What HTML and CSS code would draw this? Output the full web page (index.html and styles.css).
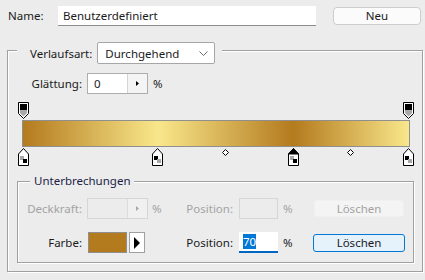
FILE: index.html
```html
<!DOCTYPE html>
<html lang="de">

<head>
    <meta charset="UTF-8">
    <meta name="viewport" content="width=device-width, initial-scale=1.0">
    <link rel="stylesheet" href="styles.css">
</head>

<body>

    <div class="name-row">
        <span class="name-label">Name:</span>
        <div class="name-field">Benutzerdefiniert</div>
        <button class="btn btn-new">Neu</button>
    </div>

    <div class="group main-group">
        <div class="group-head">
            <span class="type-label">Verlaufsart:</span>
            <div class="select">
                <span>Durchgehend</span>
                <svg class="chevron" width="9" height="5" viewBox="0 0 9 5"><path d="M0.5 0.5l4 4l4-4" fill="none" stroke="#6b6b6b"/></svg>
            </div>
        </div>

        <div class="row smooth-row">
            <span class="label smooth-label">Glättung:</span>
            <div class="spin">
                <span class="spin-value">0</span>
                <span class="spin-btn"><svg width="3" height="5" viewBox="0 0 3 5"><path d="M0 0l3 2.5l-3 2.5z" fill="#000"/></svg></span>
            </div>
            <span class="pct">%</span>
        </div>

        <div class="gradient-editor">
            <!-- opacity stops -->
            <svg class="stop stop-top" style="left:-4px" width="11" height="17" viewBox="0 0 11 17"><path d="M0.5 0.5h10v11l-5 5l-5-5z" fill="#fff" stroke="#000"/><rect x="2" y="2" width="7" height="6" fill="#000"/><path d="M2 8h7v3l-3.5 3.5l-3.5-3.5z" fill="#a8a8a8"/></svg>
            <svg class="stop stop-top" style="left:381px" width="11" height="17" viewBox="0 0 11 17"><path d="M0.5 0.5h10v11l-5 5l-5-5z" fill="#fff" stroke="#000"/><rect x="2" y="2" width="7" height="6" fill="#000"/><path d="M2 8h7v3l-3.5 3.5l-3.5-3.5z" fill="#a8a8a8"/></svg>

            <div class="gradient-bar"></div>

            <!-- colour stops -->
            <svg class="stop stop-bottom" style="left:-4px" width="11" height="18" viewBox="0 0 11 18"><path d="M5.5 0.5l5 5.5v11.5h-10v-11.5z" fill="#fff" stroke="#000"/><rect x="2" y="8" width="4" height="4" fill="#a8a8a8"/><rect x="5" y="11" width="4" height="4" fill="#000"/></svg>
            <svg class="stop stop-bottom" style="left:130px" width="11" height="18" viewBox="0 0 11 18"><path d="M5.5 0.5l5 5.5v11.5h-10v-11.5z" fill="#fff" stroke="#000"/><rect x="2" y="8" width="4" height="4" fill="#000"/><rect x="5" y="11" width="4" height="4" fill="#a8a8a8"/></svg>
            <svg class="stop stop-bottom" style="left:266px" width="11" height="18" viewBox="0 0 11 18"><path d="M5.5 0.5l5 5.5v11.5h-10v-11.5z" fill="#fff" stroke="#000"/><path d="M5.5 0.5l5 5.5h-10z" fill="#000" stroke="#000"/><rect x="2" y="8" width="4" height="4" fill="#a8a8a8"/><rect x="5" y="11" width="4" height="4" fill="#000"/></svg>
            <svg class="stop stop-bottom" style="left:381px" width="11" height="18" viewBox="0 0 11 18"><path d="M5.5 0.5l5 5.5v11.5h-10v-11.5z" fill="#fff" stroke="#000"/><rect x="2" y="8" width="4" height="4" fill="#000"/><rect x="5" y="11" width="4" height="4" fill="#a8a8a8"/></svg>

            <!-- midpoints -->
            <svg class="midpoint" style="left:200px" width="7" height="7" viewBox="0 0 7 7"><path d="M3.5 0.5l3 3l-3 3l-3-3z" fill="#fff" stroke="#000"/></svg>
            <svg class="midpoint" style="left:325px" width="7" height="7" viewBox="0 0 7 7"><path d="M3.5 0.5l3 3l-3 3l-3-3z" fill="#fff" stroke="#000"/></svg>
        </div>

        <div class="group stops-group">
            <div class="legend">Unterbrechungen</div>

            <div class="row stop-row disabled">
                <span class="label">Deckkraft:</span>
                <div class="spin">
                    <span class="spin-value"></span>
                    <span class="spin-btn"><svg width="3" height="5" viewBox="0 0 3 5"><path d="M0 0l3 2.5l-3 2.5z" fill="#a8a8a8"/></svg></span>
                </div>
                <span class="pct pct-wide">%</span>
                <span class="pos-label">Position:</span>
                <div class="pos-field"></div>
                <span class="pct pct-pos">%</span>
                <button class="btn btn-delete">Löschen</button>
            </div>

            <div class="row stop-row color-row">
                <span class="label">Farbe:</span>
                <div class="color-pick">
                    <span class="swatch"></span>
                    <span class="swatch-btn"><svg width="6" height="12" viewBox="0 0 6 12"><path d="M0 0l6 6l-6 6z" fill="#000"/></svg></span>
                </div>
                <span class="pct pct-wide"></span>
                <span class="pos-label">Position:</span>
                <div class="pos-field active"><span class="selected">70</span></div>
                <span class="pct pct-pos">%</span>
                <button class="btn btn-delete btn-focus">Löschen</button>
            </div>
        </div>
    </div>

</body>

</html>
```

FILE: styles.css
```css
body {
    margin: 0;
    width: 425px;
    height: 280px;
    overflow: hidden;
    background-color: #ececec;
    font-family: "Noto Sans", "Open Sans", sans-serif;
    font-size: 11.5px;
    color: #1a1a1a;
}

/* name row */

.name-row {
    display: flex;
    align-items: flex-start;
    padding: 6px 0 0 8px;
}

.name-label {
    width: 50px;
    line-height: 20px;
}

.name-field {
    width: 258px;
    height: 20px;
    box-sizing: border-box;
    padding-left: 5px;
    line-height: 19px;
    background-color: #fff;
    border-bottom: 1px solid #8c8c8c;
}

.btn {
    font-family: inherit;
    font-size: inherit;
    color: #1a1a1a;
    padding: 0;
    box-sizing: border-box;
    border-radius: 3px;
}

.btn-new {
    margin: 1px 0 0 17px;
    width: 88px;
    height: 18px;
    line-height: 16px;
    background-color: #fbfbfb;
    border: 1px solid #cdcdcd;
    border-radius: 4px;
}

/* group boxes */

.group {
    border: 1px solid #a0a0a0;
    box-shadow: inset 1px 1px 0 #fff, 1px 1px 0 #fff;
    box-sizing: border-box;
}

.main-group {
    margin: 24px 0 0 7px;
    width: 416px;
    height: 222px;
}

.group-head {
    display: flex;
    align-items: center;
    gap: 5px;
    width: max-content;
    margin: -9px 0 0 9px;
    padding: 0 7px 0 13px;
    background-color: #ececec;
}

.select {
    display: flex;
    align-items: center;
    justify-content: space-between;
    width: 118px;
    height: 22px;
    box-sizing: border-box;
    padding: 0 6px 0 7px;
    background-color: #fff;
    border: 1px solid #a6a6a6;
    border-radius: 2px;
}

.chevron {
    margin-top: 1px;
}

.row {
    display: flex;
    align-items: center;
    height: 21px;
}

.label {
    width: 64px;
    text-align: right;
    margin-right: 5px;
}

.smooth-row {
    margin-top: 9px;
}

.smooth-label {
    width: 74px;
}

.spin {
    display: flex;
    width: 61px;
    height: 21px;
    box-sizing: border-box;
    border: 1px solid #adadad;
    background-color: #fff;
}

.spin-value {
    flex: 1;
    padding-left: 6px;
    line-height: 19px;
}

.spin-btn {
    width: 19px;
    display: flex;
    align-items: center;
    justify-content: center;
    background-color: #f4f4f4;
    border-left: 1px solid #d4d4d4;
}

.pct {
    margin-left: 5px;
}

/* gradient */

.gradient-editor {
    position: relative;
    margin: 7px 0 0 14px;
    width: 388px;
    padding: 19px 0;
}

.gradient-bar {
    height: 27px;
    box-sizing: border-box;
    border: 1px solid #8f8f8f;
    background: linear-gradient(to right, #b47a1e 0%, #f9e78b 35%, #b47a1e 70%, #f9e78b 100%);
}

.stop,
.midpoint {
    position: absolute;
    display: block;
}

.stop-top {
    top: 1px;
}

.stop-bottom {
    top: 47px;
}

.midpoint {
    top: 48px;
}

/* stops group */

.stops-group {
    margin: 15px 8px 0 9px;
    height: 82px;
}

.legend {
    width: max-content;
    margin: -8px 0 0 12px;
    padding: 0 4px;
    height: 14px;
    line-height: 14px;
    background-color: #ececec;
    color: #1c1c48;
}

.stop-row {
    margin-top: 10px;
}

.color-row {
    margin-top: 13px;
}

.disabled {
    color: #a3a3a3;
}

.disabled .spin {
    background-color: #ececec;
    border-color: #d6d6d6;
}

.disabled .spin-btn {
    background-color: #f0f0f0;
    border-left-color: #dcdcdc;
}

.pct-wide {
    width: 30px;
    margin-left: 4px;
}

.pos-label {
    width: 51px;
    text-align: right;
    margin-right: 6px;
}

.pos-field {
    width: 39px;
    height: 21px;
    box-sizing: border-box;
    border: 1px solid #d6d6d6;
    line-height: 19px;
}

.pos-field.active {
    border: none;
    border-bottom: 2px solid #0067c0;
    background-color: #fff;
    padding-left: 4px;
    line-height: 20px;
}

.selected {
    background-color: #0078d7;
    color: #fff;
}

.pct-pos {
    width: 30px;
}

.btn-delete {
    margin-left: 1px;
    width: 90px;
    height: 17px;
    line-height: 15px;
    background-color: #f4f4f4;
    border: 1px solid #f0f0f0;
    color: #a3a3a3;
}

.btn-focus {
    margin-left: 0;
    height: 18px;
    width: 92px;
    background-color: #e5f1fb;
    border-color: #0078d7;
    color: #1a1a1a;
}

.color-pick {
    display: flex;
    align-items: center;
    width: 61px;
    height: 21px;
    padding-left: 1px;
    box-sizing: border-box;
}

.swatch {
    width: 39px;
    height: 21px;
    box-sizing: border-box;
    background-color: #b47a1e;
    border: 1px solid #8f8f8f;
}

.swatch-btn {
    display: flex;
    align-items: center;
    justify-content: center;
    margin-left: 2px;
    width: 16px;
    height: 21px;
    box-sizing: border-box;
    background-color: #fff;
    border: 1px solid #a0a0a0;
}
```
